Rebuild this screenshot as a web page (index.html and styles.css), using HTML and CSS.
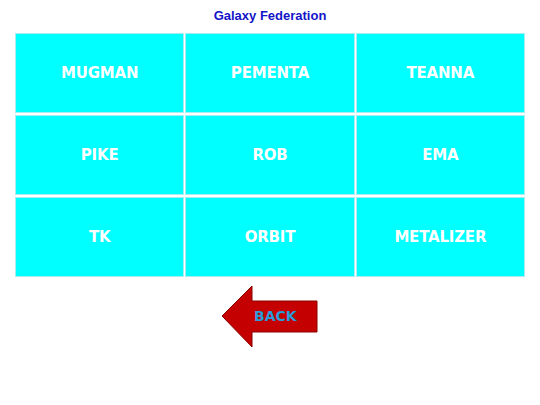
FILE: index.html
```html
<!DOCTYPE html>
<html>
<head>
<meta charset="utf-8">
<link rel="stylesheet" href="styles.css">
</head>
<body>
<div class="page">
  <h1 class="title">Galaxy Federation</h1>
  <div class="grid">
    <div class="cell">MUGMAN</div>
    <div class="cell">PEMENTA</div>
    <div class="cell">TEANNA</div>
    <div class="cell">PIKE</div>
    <div class="cell">ROB</div>
    <div class="cell">EMA</div>
    <div class="cell">TK</div>
    <div class="cell">ORBIT</div>
    <div class="cell">METALIZER</div>
  </div>
  <div class="back-row">
    <div class="back">
      <svg class="arrow" width="98" height="64" viewBox="0 0 98 64">
        <polygon points="1,31 31,1 31,16 96,16 96,47 31,47 31,62" fill="#c40000" stroke="#8a0000" stroke-width="1"/>
      </svg>
      <span class="back-label">BACK</span>
    </div>
  </div>
</div>
</body>
</html>
```
FILE: styles.css
```css
html, body {
  margin: 0;
  padding: 0;
  background: #ffffff;
}
.page {
  width: 540px;
  height: 405px;
  padding: 8px 15px 0 15px;
  box-sizing: border-box;
}
.title {
  margin: 0 0 9px 0;
  text-align: center;
  font-family: "Liberation Sans", Arial, sans-serif;
  font-weight: bold;
  font-size: 13px;
  line-height: 16px;
  color: #1414c8;
}
.grid {
  display: grid;
  grid-template-columns: repeat(3, 1fr);
  grid-template-rows: repeat(3, 80px);
  gap: 2px 1px;
  width: 510px;
}
.cell {
  background: #00ffff;
  border: 1px solid #a8eef0;
  display: flex;
  align-items: center;
  justify-content: center;
  color: #ffffff;
  font-family: "DejaVu Sans", sans-serif;
  font-weight: bold;
  font-size: 15px;
  letter-spacing: -0.2px;
}
.back-row {
  display: flex;
  justify-content: flex-start;
  padding: 8px 0 0 206px;
}
.back {
  position: relative;
  width: 98px;
  height: 64px;
}
.arrow {
  display: block;
}
.back-label {
  position: absolute;
  left: 33px;
  top: 22px;
  font-family: "DejaVu Sans", sans-serif;
  font-weight: bold;
  font-size: 14px;
  line-height: 18px;
  color: #2a9ad8;
}
```
